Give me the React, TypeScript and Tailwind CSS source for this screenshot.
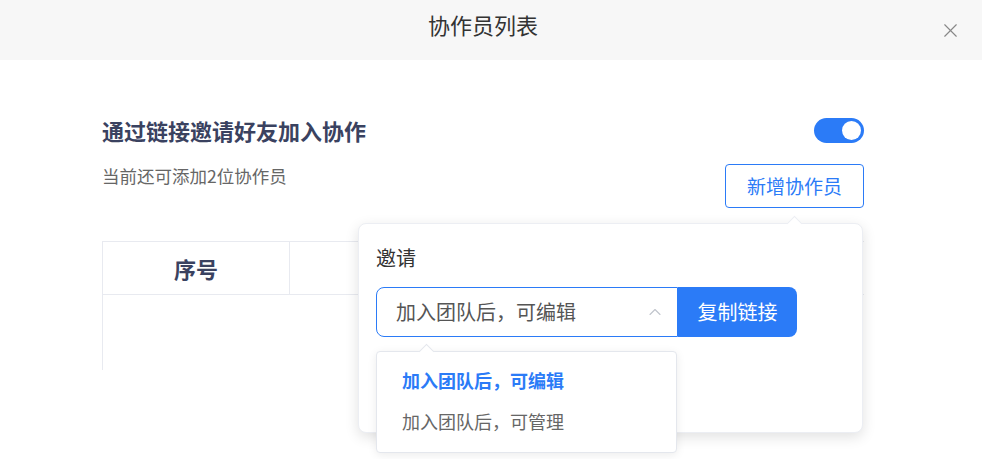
import { X, ChevronUp } from "lucide-react";

const font = { fontFamily: '"Noto Sans CJK SC", "Noto Sans", sans-serif' };

function Toggle() {
  return (
    <div className="w-[50px] h-[25px] rounded-full bg-[#2b7bf7] flex items-center justify-end px-[3px]">
      <div className="w-[19px] h-[19px] rounded-full bg-white" />
    </div>
  );
}

function InvitePopover() {
  return (
    <div className="absolute left-[358px] top-[223px] w-[505px] h-[210px] bg-white rounded-lg border border-[#eceef3] shadow-[0_4px_14px_rgba(0,0,0,0.12)] px-[17px] pt-[20px]">
      {/* arrow under the add button */}
      <div className="absolute -top-[6px] left-[430px] w-[11px] h-[11px] bg-white border-l border-t border-[#eceef3] rotate-45" />
      <div className="text-[20px] leading-[28px] text-[#333]">邀请</div>
      <div className="flex mt-[15px]">
        <div className="w-[302px] h-[50px] border border-[#2b7bf7] rounded-l-lg flex items-center justify-between pl-[19px] pr-[12px]">
          <span className="text-[20px] text-[#555]">加入团队后，可编辑</span>
          <ChevronUp size={20} strokeWidth={1.3} className="text-[#c0c4cc]" />
        </div>
        <button className="w-[119px] h-[50px] bg-[#2b7bf7] rounded-r-lg text-white text-[20px]">
          复制链接
        </button>
      </div>
    </div>
  );
}

function RoleMenu() {
  return (
    <div className="absolute left-[376px] top-[351px] w-[301px] h-[102px] bg-white border border-[#e4e7ed] rounded shadow-[0_2px_10px_rgba(0,0,0,0.08)] pt-[8px]">
      <div className="absolute -top-[6px] left-[44px] w-[11px] h-[11px] bg-white border-l border-t border-[#e4e7ed] rotate-45" />
      <div className="h-[41px] flex items-center pl-[25px] text-[18px] font-bold text-[#2b7bf7]">
        加入团队后，可编辑
      </div>
      <div className="h-[41px] flex items-center pl-[25px] text-[18px] text-[#666]">
        加入团队后，可管理
      </div>
    </div>
  );
}

export default function App() {
  return (
    <div className="relative w-[982px] h-[459px] bg-white overflow-hidden" style={font}>
      <div className="h-[60px] bg-[#f7f7f7] flex items-center justify-center relative pr-[16px]">
        <span className="text-[22px] text-[#333] -mt-[12px]">协作员列表</span>
        <X size={23} strokeWidth={1.2} className="absolute right-[20px] top-[19px] text-[#888]" />
      </div>

      <div className="pl-[102px] pr-[118px]">
        <div className="flex items-center justify-between mt-[56px]">
          <h2 className="text-[22px] font-bold text-[#3a4260] leading-[28px]">通过链接邀请好友加入协作</h2>
          <Toggle />
        </div>
        <div className="flex justify-between items-start mt-[20px]">
          <span className="text-[17.5px] text-[#666] leading-[24px]">当前还可添加2位协作员</span>
          <button className="w-[139px] h-[44px] border border-[#2b7bf7] rounded text-[#2b7bf7] text-[19px]">
            新增协作员
          </button>
        </div>

        <div className="mt-[33px] border-l border-t border-[#e8eaf0] h-[129px]">
          <div className="flex h-[53px] border-b border-[#e8eaf0]">
            <div className="w-[187px] border-r border-[#e8eaf0] flex items-center justify-center text-[22px] font-bold text-[#3a4260]">
              序号
            </div>
            <div className="flex-1" />
          </div>
        </div>
      </div>

      <InvitePopover />
      <RoleMenu />
    </div>
  );
}
